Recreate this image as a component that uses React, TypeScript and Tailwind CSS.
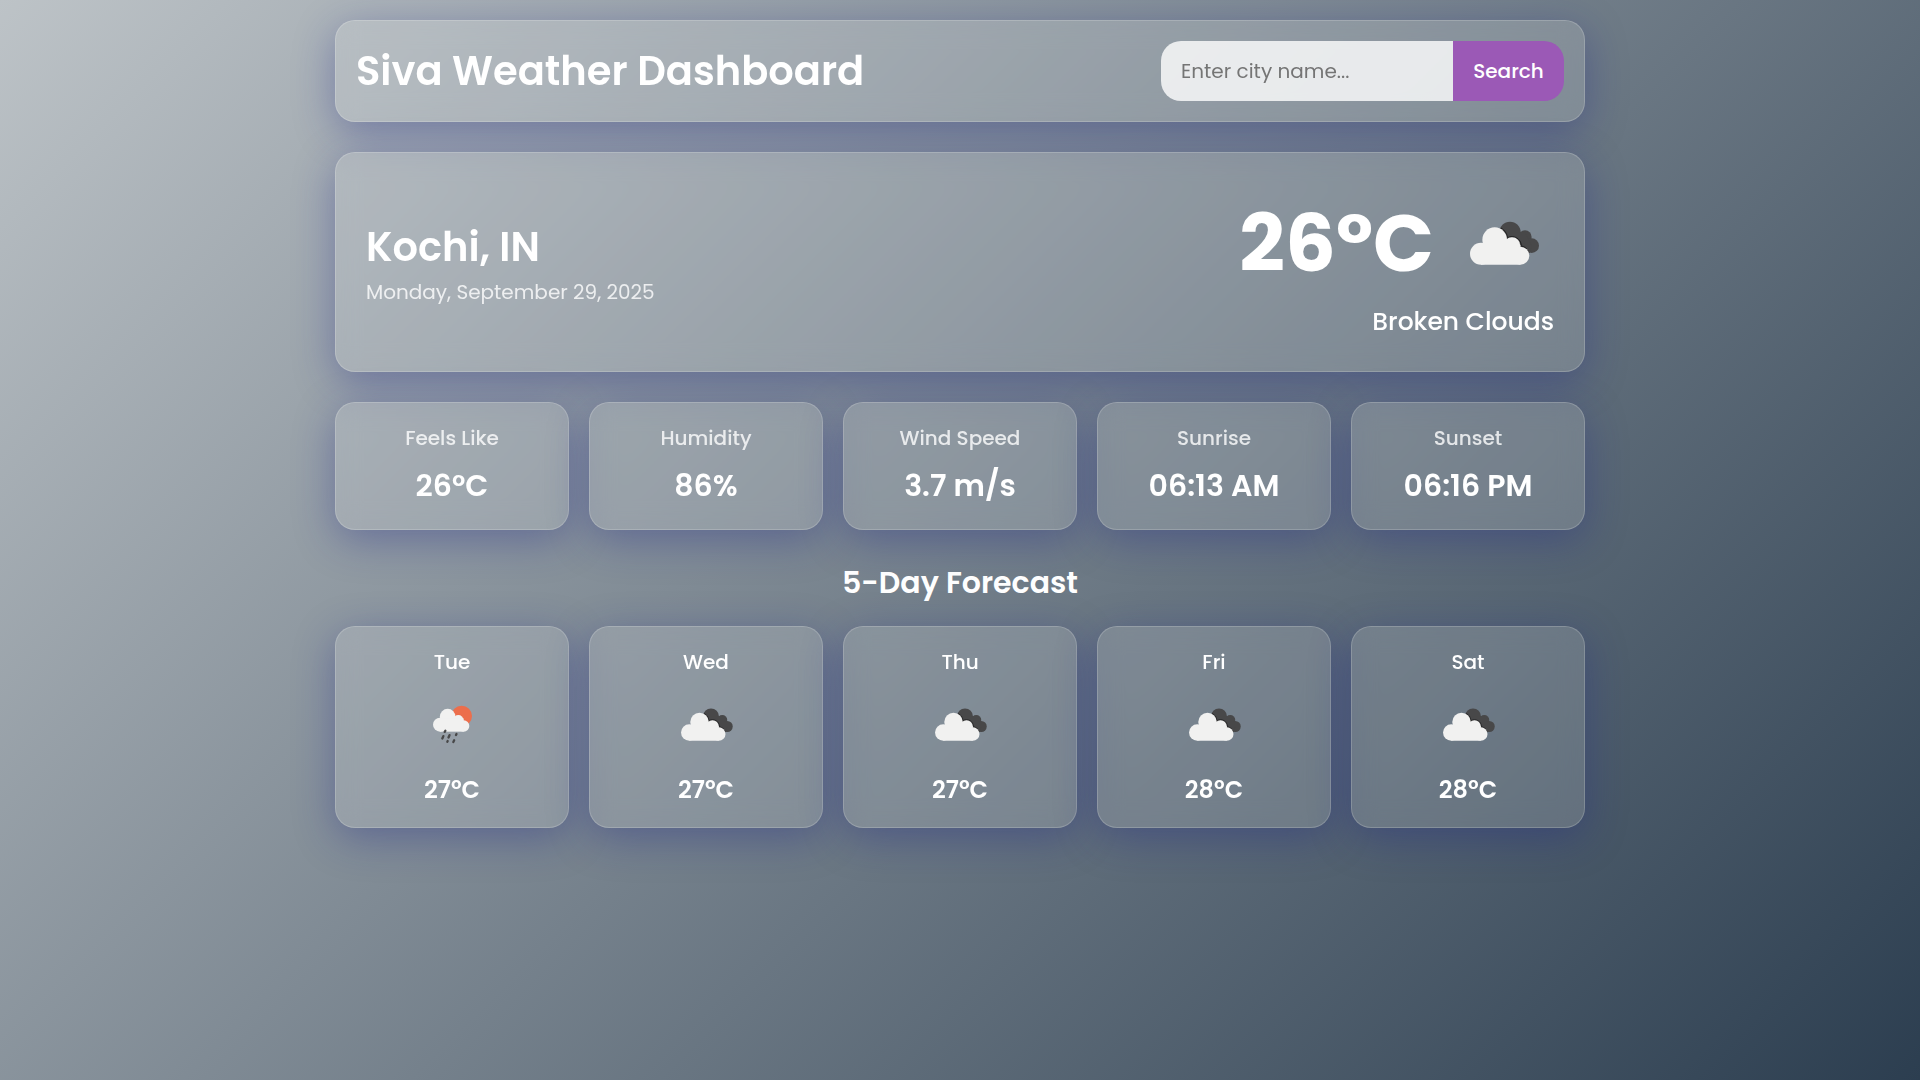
import type { ReactNode } from "react";

const stats = [
  { label: "Feels Like", value: "26°C" },
  { label: "Humidity", value: "86%" },
  { label: "Wind Speed", value: "3.7 m/s" },
  { label: "Sunrise", value: "06:13 AM" },
  { label: "Sunset", value: "06:16 PM" },
];

const forecast = [
  { day: "Tue", temp: 27, icon: "rain" },
  { day: "Wed", temp: 27, icon: "clouds" },
  { day: "Thu", temp: 27, icon: "clouds" },
  { day: "Fri", temp: 28, icon: "clouds" },
  { day: "Sat", temp: 28, icon: "clouds" },
];

function Glass({ className, children }: { className: string; children: ReactNode }) {
  return (
    <div
      className={`rounded-[20px] border border-white/[0.18] bg-white/15 shadow-[0_10px_40px_0_rgba(31,38,135,0.37)] backdrop-blur-[12.5px] ${className}`}
    >
      {children}
    </div>
  );
}

function BrokenClouds({ className }: { className: string }) {
  return (
    <svg viewBox="0 0 300 300" className={className}>
      <g transform="translate(-12 35)">
        <g fill="#484849">
          <circle cx="180" cy="83" r="32" />
          <circle cx="225" cy="97" r="20" />
          <circle cx="245" cy="123" r="22" />
          <path d="M170 83h55l20 40-5 22h-60z" />
        </g>
        <g fill="none" stroke="#1f1f20" strokeWidth="3">
          <path d="M153 70a39.500 39.500 0 0 1 19.500 29" />
          <path d="M173 99a28 28 0 0 1 41 23" />
          <path d="M213 123a30 30 0 0 1 22 17" />
        </g>
        <g fill="#f1f1f0">
          <circle cx="93" cy="147" r="33" />
          <circle cx="134" cy="105" r="37" />
          <circle cx="186" cy="123" r="25" />
          <circle cx="211" cy="153" r="27" />
          <path d="M93 120h118v60H93z" />
        </g>
      </g>
    </svg>
  );
}

function SunRain({ className }: { className: string }) {
  return (
    <svg viewBox="0 0 225 225" className={className}>
      <g transform="translate(-15 9)">
        <circle cx="155" cy="78" r="31" fill="#ec6e4c" />
        <g fill="#f1f1f0">
          <circle cx="90" cy="104" r="21" />
          <circle cx="113" cy="80" r="23.5" />
          <circle cx="145" cy="90" r="15" />
          <circle cx="161" cy="108" r="17" />
          <path d="M90 85h71v40H90z" />
        </g>
        <g stroke="#484849" strokeLinecap="round" strokeWidth="7">
          <path d="M106 122.500l-2 3M100 138.500l-3 7M118.500 135.500l-3 7M139.500 132l-1.500 3M113 153l-1 2M132.500 151l-2.500 5" />
        </g>
      </g>
    </svg>
  );
}

export default function App() {
  return (
    <div className="min-h-screen bg-[linear-gradient(135deg,#bdc3c7,#2c3e50)] pt-5 font-['Poppins','Inter',sans-serif] text-white">
      <div className="mx-auto flex w-[1250px] flex-col">
        <Glass className="flex h-[102px] items-center justify-between px-5">
          <h1 className="text-[40px] leading-[60px] font-semibold">Siva Weather Dashboard</h1>
          <div className="flex h-[60px]">
            <input
              type="text"
              placeholder="Enter city name..."
              className="w-[292px] rounded-l-[20px] bg-white/80 px-5 text-xl text-[#333] outline-none placeholder:text-[#757575]"
            />
            <button className="w-[111px] rounded-r-[20px] bg-[#9b59b6] text-xl font-medium">Search</button>
          </div>
        </Glass>

        <Glass className="mt-[30px] flex h-[220px] items-center justify-between px-[30px]">
          <div>
            <h2 className="text-[40px] leading-[60px] font-semibold">Kochi, IN</h2>
            <p className="text-xl leading-[30px] opacity-80">Monday, September 29, 2025</p>
          </div>
          <div className="flex flex-col items-end">
            <div className="flex items-center">
              <span className="mr-5 text-[80px] leading-[120px] font-bold">26°C</span>
              <BrokenClouds className="size-[100px]" />
            </div>
            <p className="text-[25px] leading-[38px] font-medium">Broken Clouds</p>
          </div>
        </Glass>

        <div className="mt-[30px] grid grid-cols-5 gap-5">
          {stats.map((s) => (
            <Glass key={s.label} className="flex h-32 flex-col items-center pt-5">
              <h3 className="text-xl leading-[30px] font-medium opacity-80">{s.label}</h3>
              <p className="mt-2.5 text-[30px] leading-[45px] font-semibold">{s.value}</p>
            </Glass>
          ))}
        </div>

        <h2 className="mt-[30px] text-center text-[30px] leading-[45px] font-semibold">5-Day Forecast</h2>

        <div className="mt-[21px] grid grid-cols-5 gap-5">
          {forecast.map((f) => (
            <Glass key={f.day} className="h-[202px] pt-5 text-center">
              <h4 className="text-xl leading-[30px] font-medium">{f.day}</h4>
              {f.icon === "rain" ? (
                <SunRain className="mx-auto mt-2.5 size-[75px]" />
              ) : (
                <BrokenClouds className="mx-auto mt-2.5 size-[75px]" />
              )}
              <p className="mt-[9px] text-[24px] leading-[38px] font-semibold">{f.temp}°C</p>
            </Glass>
          ))}
        </div>
      </div>
    </div>
  );
}
